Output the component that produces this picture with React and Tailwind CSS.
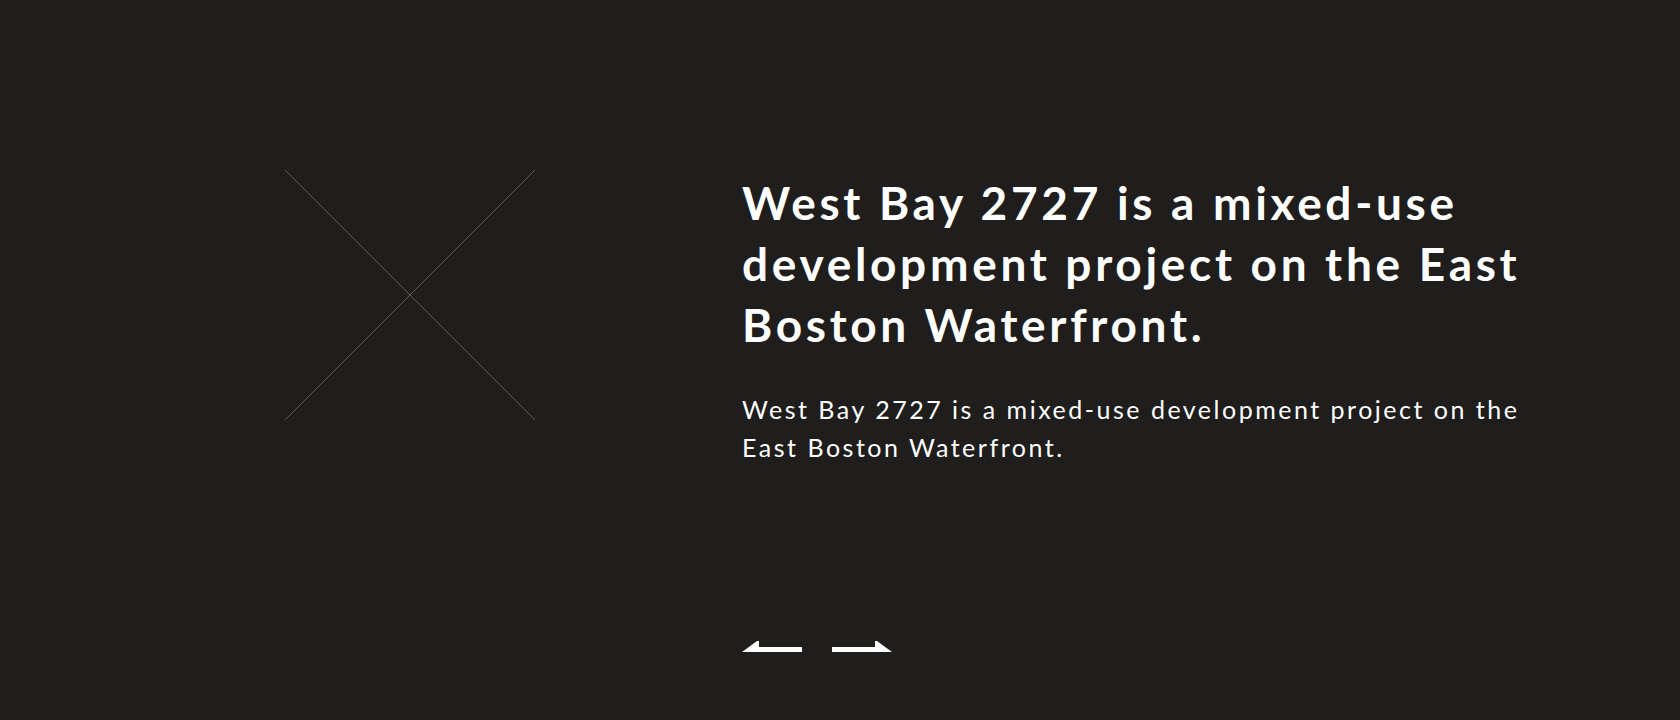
import React from 'react';

function Arrow({ dir = 'left' }) {
  const pts =
    dir === 'left'
      ? '0,11 15,0 17,0 17,6 60,6 60,11'
      : '0,6 43,6 43,0 45,0 60,11 0,11';
  return (
    <svg width="60" height="11" viewBox="0 0 60 11" className="block">
      <polygon points={pts} fill="#ffffff" />
    </svg>
  );
}

export default function App() {
  return (
    <div
      className="w-full h-[720px] bg-[#1f1e1d] flex overflow-hidden"
      style={{ fontFamily: 'Lato, "Liberation Sans", sans-serif' }}
    >
      {/* placeholder image */}
      <div className="pl-[285px] pt-[170px] shrink-0">
        <svg width="250" height="250" viewBox="0 0 250 250" className="block">
          <line x1="0" y1="0" x2="250" y2="250" stroke="#5c5b59" strokeWidth="1" />
          <line x1="250" y1="0" x2="0" y2="250" stroke="#5c5b59" strokeWidth="1" />
        </svg>
      </div>

      <div className="ml-[207px] pt-[172px] w-[800px] flex flex-col text-white">
        <h1 className="text-[46px] leading-[61px] font-bold tracking-[0.08em]">
          West Bay 2727 is a mixed-use development project on the East Boston Waterfront.
        </h1>
        <p className="mt-[35px] text-[25px] leading-[38px] tracking-[0.1em]">
          West Bay 2727 is a mixed-use development project on the East Boston Waterfront.
        </p>
        <div className="mt-[175px] flex items-end gap-[30px]">
          <button className="cursor-pointer">
            <Arrow dir="left" />
          </button>
          <button className="cursor-pointer">
            <Arrow dir="right" />
          </button>
        </div>
      </div>
    </div>
  );
}
